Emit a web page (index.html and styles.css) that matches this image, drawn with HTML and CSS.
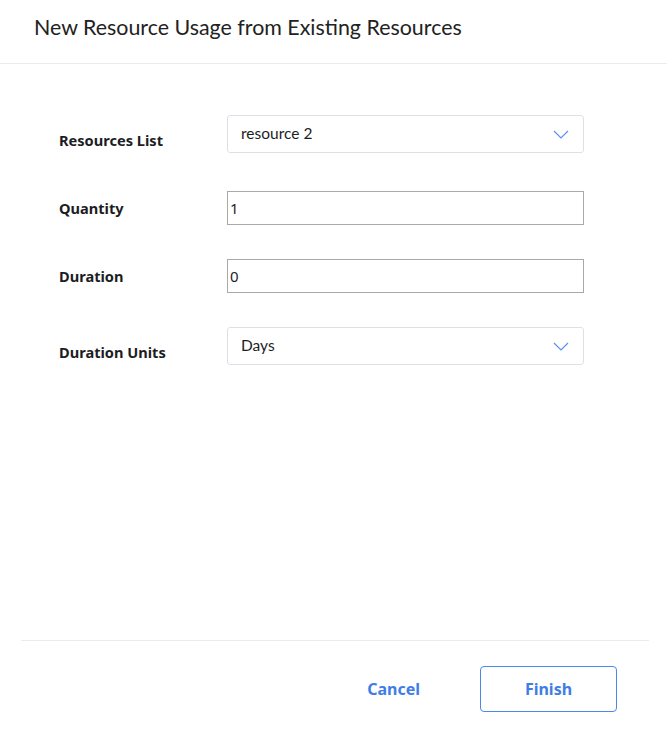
FILE: index.html
```html
<!DOCTYPE html>
<html>
<head>
<meta charset="utf-8">
<link rel="stylesheet" href="styles.css">
</head>
<body>
<div class="dialog">
  <header class="dialog-header">
    <h1 class="dialog-title">New Resource Usage from Existing Resources</h1>
  </header>
  <main class="dialog-body">
    <div class="row row-select row-first">
      <label class="field-label">Resources List</label>
      <div class="select">
        <span class="select-value">resource 2</span>
        <svg class="chevron" width="16" height="9" viewBox="0 0 16 9"><path d="M1 1 L8 8 L15 1" fill="none" stroke="#5b8ff0" stroke-width="1.2"/></svg>
      </div>
    </div>
    <div class="row row-input">
      <label class="field-label">Quantity</label>
      <input class="text-input" type="text" value="1">
    </div>
    <div class="row row-input">
      <label class="field-label">Duration</label>
      <input class="text-input" type="text" value="0">
    </div>
    <div class="row row-select">
      <label class="field-label">Duration Units</label>
      <div class="select">
        <span class="select-value">Days</span>
        <svg class="chevron" width="16" height="9" viewBox="0 0 16 9"><path d="M1 1 L8 8 L15 1" fill="none" stroke="#5b8ff0" stroke-width="1.2"/></svg>
      </div>
    </div>
  </main>
  <footer class="dialog-footer">
    <button class="btn btn-link">Cancel</button>
    <button class="btn btn-outline">Finish</button>
  </footer>
</div>
</body>
</html>
```
FILE: styles.css
```css
html, body {
  margin: 0;
  padding: 0;
  background: #ffffff;
}
body {
  font-family: Lato, "Noto Sans", sans-serif;
  color: #1d1d1f;
}
.dialog {
  width: 667px;
  height: 734px;
  display: flex;
  flex-direction: column;
}
.dialog-header {
  height: 64px;
  border-bottom: 1px solid #e9ecef;
  box-sizing: border-box;
  padding: 0 34px;
  display: flex;
  align-items: center;
}
.dialog-title {
  margin: 0;
  font-size: 21.4px;
  font-weight: 400;
  color: #222;
  padding-bottom: 10px;
}
.dialog-body {
  flex: 1;
  padding: 51px 83px 0 59px;
  display: flex;
  flex-direction: column;
}
.row {
  display: flex;
  align-items: center;
}
.row-input {
  margin-top: 34px;
}
.row-first + .row-input {
  margin-top: 38px;
}
.row-select + .row-select,
.row-input + .row-select {
  margin-top: 34px;
}
.field-label {
  width: 168px;
  font-family: "Noto Sans", Lato, sans-serif;
  font-size: 14.6px;
  font-weight: 700;
  color: #1d1d1f;
}
.row-select .field-label {
  margin-top: 11px;
}
.select {
  width: 357px;
  height: 38px;
  box-sizing: border-box;
  border: 1px solid #dde1e6;
  border-radius: 3px;
  padding: 0 13px 0 13px;
  display: flex;
  align-items: center;
  justify-content: space-between;
}
.select-value {
  font-size: 15.5px;
  color: #1d1d1f;
  padding-bottom: 3px;
}
.chevron {
  display: block;
  margin-right: 1px;
}
.text-input {
  width: 357px;
  height: 34px;
  box-sizing: border-box;
  border: 1px solid #a9a9a9;
  border-radius: 0;
  padding: 0 2px;
  font-family: "Noto Sans", Lato, sans-serif;
  font-size: 15px;
  color: #1d1d1f;
  margin: 0;
  outline: none;
}
.dialog-footer {
  margin: 0 18px 22px 21px;
  border-top: 1px solid #e9ecef;
  padding: 25px 32px 0 0;
  height: 46px;
  display: flex;
  justify-content: flex-end;
  align-items: center;
  gap: 54px;
}
.btn {
  font-family: "Noto Sans", Lato, sans-serif;
  font-size: 16px;
  font-weight: 700;
  color: #3f7de6;
  background: #fff;
  cursor: pointer;
}
.btn-link {
  border: none;
  padding: 0 6px;
  height: 46px;
}
.btn-outline {
  width: 137px;
  height: 46px;
  border: 1px solid #4a88ec;
  border-radius: 4px;
}
```
